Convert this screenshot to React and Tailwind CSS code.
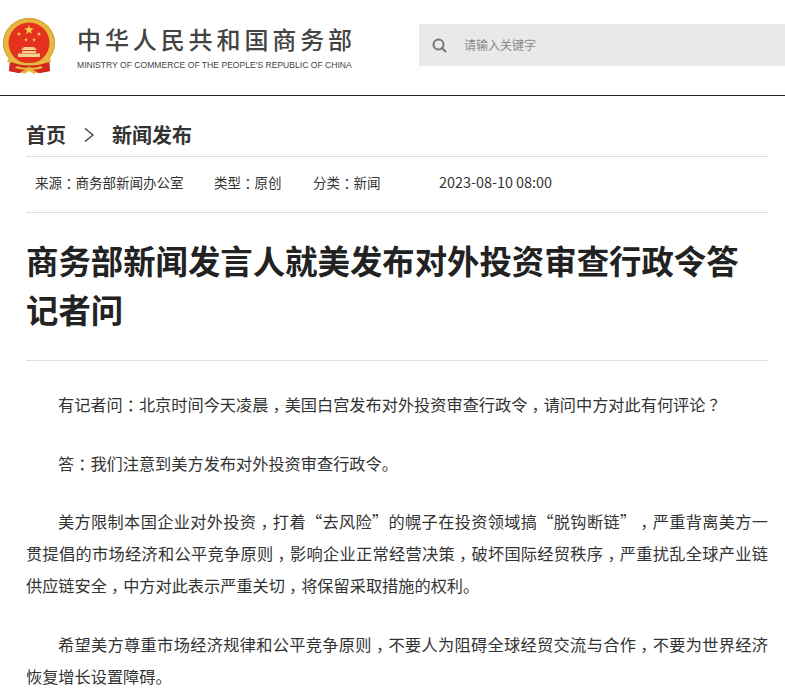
const cjk = "font-['Noto_Sans_CJK_SC','Noto_Sans',sans-serif]";

function Star({ cx, cy, r }) {
  const pts = [];
  for (let i = 0; i < 10; i++) {
    const a = -Math.PI / 2 + (i * Math.PI) / 5;
    const rr = i % 2 ? r * 0.42 : r;
    pts.push(`${(cx + rr * Math.cos(a)).toFixed(2)},${(cy + rr * Math.sin(a)).toFixed(2)}`);
  }
  return <polygon points={pts.join(" ")} fill="#f6d34a" />;
}

function Emblem() {
  return (
    <svg width="54" height="57" viewBox="0 0 54 57" className="shrink-0">
      <path d="M7 40 L6 53 L16 55 L26 52 L36 55 L47 53 L46 40 Z" fill="#d2281e" />
      <ellipse cx="26" cy="25" rx="26" ry="25" fill="#e6b83f" />
      <ellipse cx="26" cy="25" rx="25.5" ry="24.5" fill="none" stroke="#d39a2c" strokeWidth="1" />
      <circle cx="26" cy="25" r="20.5" fill="#e5321f" />
      <Star cx={26} cy={12} r={5} />
      <Star cx={16} cy={16} r={2.2} />
      <Star cx={36} cy={16} r={2.2} />
      <Star cx={23} cy={22} r={2} />
      <Star cx={31} cy={22} r={2} />
      <path d="M21 29 H31 L34 32 H18 Z M19 33 H33 V35 H19 Z M15 35.5 H37 V39 H15 Z" fill="#f2d48c" />
      <path d="M6 39 L7 41 Q26 49 45 41 L47 39 L48 44 Q26 52 4 44 Z" fill="#e6b83f" />
      <path d="M8 44 Q26 51 46 44 L47 53 L37 55 L26 51 L16 55 L6 53 Z" fill="#d2281e" />
      <path d="M14 48 Q21 51 26 49 Q32 51 38 48 L40 50 Q32 53 26 51 Q20 53 12 50 Z M18 54 L26 50 L34 54 L31 56 L26 53 L21 56 Z" fill="#e8b93c" />
    </svg>
  );
}

const PUNCT = "，：？";

function Txt({ s }) {
  const parts = [];
  let buf = "";
  [...s].forEach((ch, i) => {
    if (PUNCT.includes(ch)) {
      if (buf) parts.push(buf);
      buf = "";
      parts.push(
        <span key={i} className="inline-block w-[1em] indent-0 text-center [font-feature-settings:'halt']">
          {ch}
        </span>
      );
    } else {
      buf += ch;
    }
  });
  if (buf) parts.push(buf);
  return <>{parts}</>;
}

const Para = ({ s }) => (
  <p className="indent-8 mb-[26.5px] text-justify">
    <Txt s={s} />
  </p>
);

export default function App() {
  return (
    <div className={`w-[785px] h-[696px] overflow-hidden bg-white text-[#333] [text-spacing-trim:space-all] ${cjk}`}>
      <header className="h-[96px] border-b border-[#222] flex items-start">
        <div className="flex items-start pl-[3px] pt-[18px] w-[419px] shrink-0">
          <Emblem />
          <div className="ml-5 pt-[6px] text-[#444]">
            <div className="text-[24px] font-medium leading-[30px] tracking-[3.9px] whitespace-nowrap">中华人民共和国商务部</div>
            <div className="font-['Liberation_Sans',sans-serif] text-[8.58px] leading-[12px] mt-[5px] whitespace-nowrap">MINISTRY OF COMMERCE OF THE PEOPLE'S REPUBLIC OF CHINA</div>
          </div>
        </div>
        <div className="mt-6 h-[42px] flex-1 bg-[#e9e9e9] flex items-center pl-[13px] text-[#888]">
          <svg width="15" height="15" viewBox="0 0 15 15" fill="none" stroke="#777" strokeWidth="2">
            <circle cx="6.5" cy="6.5" r="5" />
            <path d="M10 10 L13.5 13.5" strokeLinecap="round" />
          </svg>
          <span className="ml-[17px] text-[12px]">请输入关键字</span>
        </div>
      </header>

      <main className="pl-[26px] pr-[17px]">
        <div className="h-[61px] flex items-center border-b border-[#ddd] text-[20px] font-bold text-[#333] pt-[18px]">
          <span>首页</span>
          <svg width="12" height="16" viewBox="0 0 12 16" fill="none" stroke="#333" strokeWidth="1.2" className="ml-[17px] mr-[17px]">
            <path d="M2 1.5 L10 8 L2 14.5" />
          </svg>
          <span>新闻发布</span>
        </div>
        <div className="h-[56px] border-b border-[#ddd] flex items-center pl-[9px] text-[13.5px] pb-[5px]">
          <span className="w-[179px]"><Txt s="来源：商务部新闻办公室" /></span>
          <span className="w-[99px]"><Txt s="类型：原创" /></span>
          <span className="w-[126px]"><Txt s="分类：新闻" /></span>
          <span className="text-[14.4px]">2023-08-10 08:00</span>
        </div>
        <h1 className="text-[32.4px] leading-[49px] font-bold text-[#222] pt-[22px] pb-[27px] border-b border-[#ddd]">
          商务部新闻发言人就美发布对外投资审查行政令答记者问
        </h1>
        <article className="pt-[27px] text-[16.2px] leading-[32px] text-[#333]">
          <Para s="有记者问：北京时间今天凌晨，美国白宫发布对外投资审查行政令，请问中方对此有何评论？" />
          <Para s="答：我们注意到美方发布对外投资审查行政令。" />
          <Para s="美方限制本国企业对外投资，打着“去风险”的幌子在投资领域搞“脱钩断链”，严重背离美方一贯提倡的市场经济和公平竞争原则，影响企业正常经营决策，破坏国际经贸秩序，严重扰乱全球产业链供应链安全，中方对此表示严重关切，将保留采取措施的权利。" />
          <Para s="希望美方尊重市场经济规律和公平竞争原则，不要人为阻碍全球经贸交流与合作，不要为世界经济恢复增长设置障碍。" />
        </article>
      </main>
    </div>
  );
}
